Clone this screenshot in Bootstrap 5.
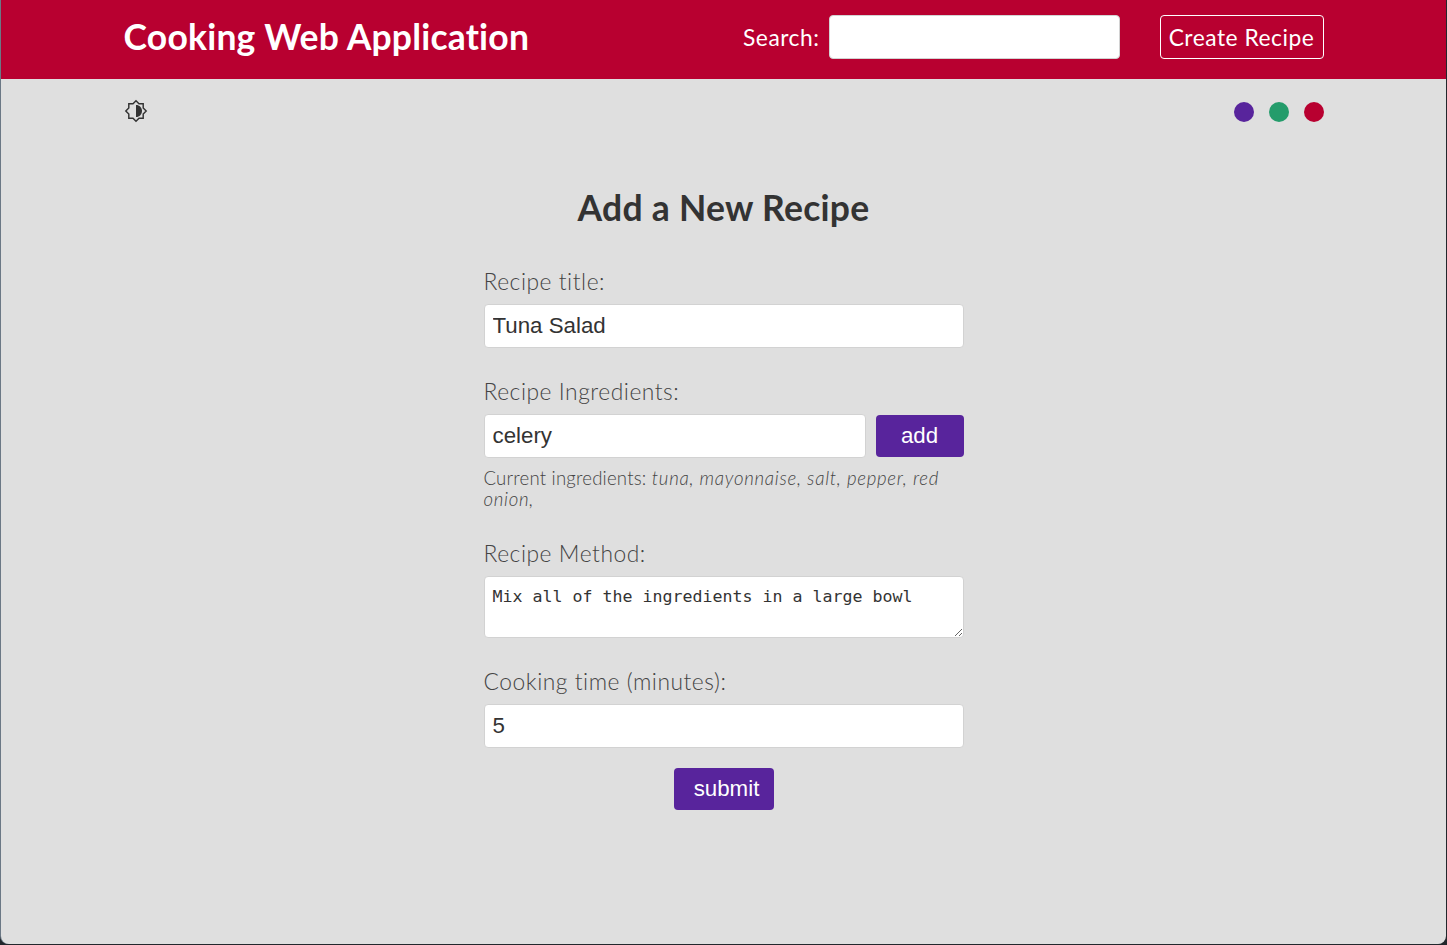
<!DOCTYPE html>
<html lang="en">
<head>
<meta charset="utf-8">
<meta name="viewport" content="width=device-width, initial-scale=1">
<title>Cooking Web Application</title>
<link href="https://cdn.jsdelivr.net/npm/bootstrap@5.3.0/dist/css/bootstrap.min.css" rel="stylesheet">
<style>
  html { background: #22272c; }
  body { background: transparent; font-family: Lato, "Open Sans", sans-serif; color: #333; overflow: hidden; }
  .app-shell { height: 944px; margin: 0 1px 1px; background: #dfdfdf; border-radius: 0 0 8px 8px; box-shadow: -1px 0 #6b7885; }
  .app-inner { width: 1200px; }
  .app-bar { background: #b80030; height: 79px; line-height: 1; padding-bottom: 5px; }
  .brand-title { font-size: 35.5px; font-weight: 700; letter-spacing: .2px; }
  .bar-text { font-size: 22.8px; letter-spacing: .52px; }
  .field { height: 44px; padding: 7px 8px; border: 1px solid #d2d2d2; border-radius: 4px; color: #333; font: 22.3px/28px "Liberation Sans", Arial, sans-serif; background: #fff; }
  .search-field { width: 291px; margin: 0 40px 0 9px; }
  .create-link { width: 164px; height: 44px; border: 1px solid #fff; border-radius: 4px; }
  .tools { height: 66px; }
  .theme-icon { margin-bottom: 2px; }
  .dots { gap: 15px; }
  .dot { width: 20px; height: 20px; border-radius: 50%; }
  .dot-purple { background: #58249c; }
  .dot-green { background: #249c6b; }
  .dot-red { background: #b80030; }
  .recipe-form { width: 480px; }
  .form-title { font-size: 35.5px; font-weight: 700; line-height: 40px; letter-spacing: .28px; margin: 43px 0 40px; }
  .field-label { display: block; font-size: 22.8px; font-weight: 300; line-height: 26px; letter-spacing: .54px; color: #444; margin-bottom: 10px; }
  .group { margin-bottom: 30px; }
  .group-last { margin-bottom: 20px; }
  .ingredient-row { gap: 10px; }
  .current { font-size: 18.6px; line-height: 21px; font-weight: 300; letter-spacing: .2px; color: #444; margin: 10px 0 0; }
  .current em { letter-spacing: .73px; }
  .method-field { height: 62px; padding-top: 9px; font: 16.61px/22px "DejaVu Sans Mono", monospace; resize: vertical; overflow: hidden; }
  .action { height: 42px; border: 0; border-radius: 4px; background: #58249c; color: #fff; font: 22.3px/42px "Liberation Sans", Arial, sans-serif; padding: 0; }
  .action-add { width: 88px; }
  .action-submit { width: 100px; padding-left: 6px; }
</style>
</head>
<body>
<div class="app-shell">
  <header class="app-bar text-white">
    <div class="app-inner mx-auto d-flex align-items-center h-100">
      <h1 class="brand-title mb-0 me-auto text-nowrap">Cooking Web Application</h1>
      <label for="search" class="bar-text">Search:</label>
      <input id="search" type="text" class="field search-field">
      <a href="#" class="create-link bar-text d-flex align-items-center justify-content-center text-white text-decoration-none text-nowrap">Create Recipe</a>
    </div>
  </header>
  <div class="tools app-inner mx-auto d-flex align-items-center justify-content-between">
    <svg class="theme-icon" width="24" height="24" viewBox="0 0 24 24" aria-label="Toggle brightness"><path d="M19.2 9V4.8H15L12 1.8 9 4.8H4.8V9L1.8 12l3 3v4.2H9l3 3 3-3h4.2V15l3-3z" fill="none" stroke="#333" stroke-width="1.45"/><path d="M12 6v12c3.6 0 6-2.69 6-6s-2.4-6-6-6z" fill="#333"/></svg>
    <div class="dots d-flex">
      <div class="dot dot-purple"></div>
      <div class="dot dot-green"></div>
      <div class="dot dot-red"></div>
    </div>
  </div>
  <form class="recipe-form mx-auto">
    <h2 class="form-title text-center text-nowrap">Add a New Recipe</h2>
    <div class="group">
      <label class="field-label" for="title">Recipe title:</label>
      <input id="title" type="text" class="field w-100 d-block" value="Tuna Salad">
    </div>
    <div class="group">
      <label class="field-label" for="ingredient">Recipe Ingredients:</label>
      <div class="ingredient-row d-flex align-items-center">
        <input id="ingredient" type="text" class="field flex-grow-1" value="celery">
        <button type="button" class="action action-add">add</button>
      </div>
      <p class="current">Current ingredients: <em>tuna, mayonnaise, salt, pepper, red<br>onion,</em></p>
    </div>
    <div class="group">
      <label class="field-label" for="method">Recipe Method:</label>
      <textarea id="method" class="field method-field w-100 d-block" spellcheck="false">Mix all of the ingredients in a large bowl</textarea>
    </div>
    <div class="group-last">
      <label class="field-label" for="time">Cooking time (minutes):</label>
      <input id="time" type="text" class="field w-100 d-block" value="5">
    </div>
    <button type="button" class="action action-submit d-block mx-auto">submit</button>
  </form>
</div>
<script src="https://cdn.jsdelivr.net/npm/bootstrap@5.3.0/dist/js/bootstrap.bundle.min.js"></script>
</body>
</html>
